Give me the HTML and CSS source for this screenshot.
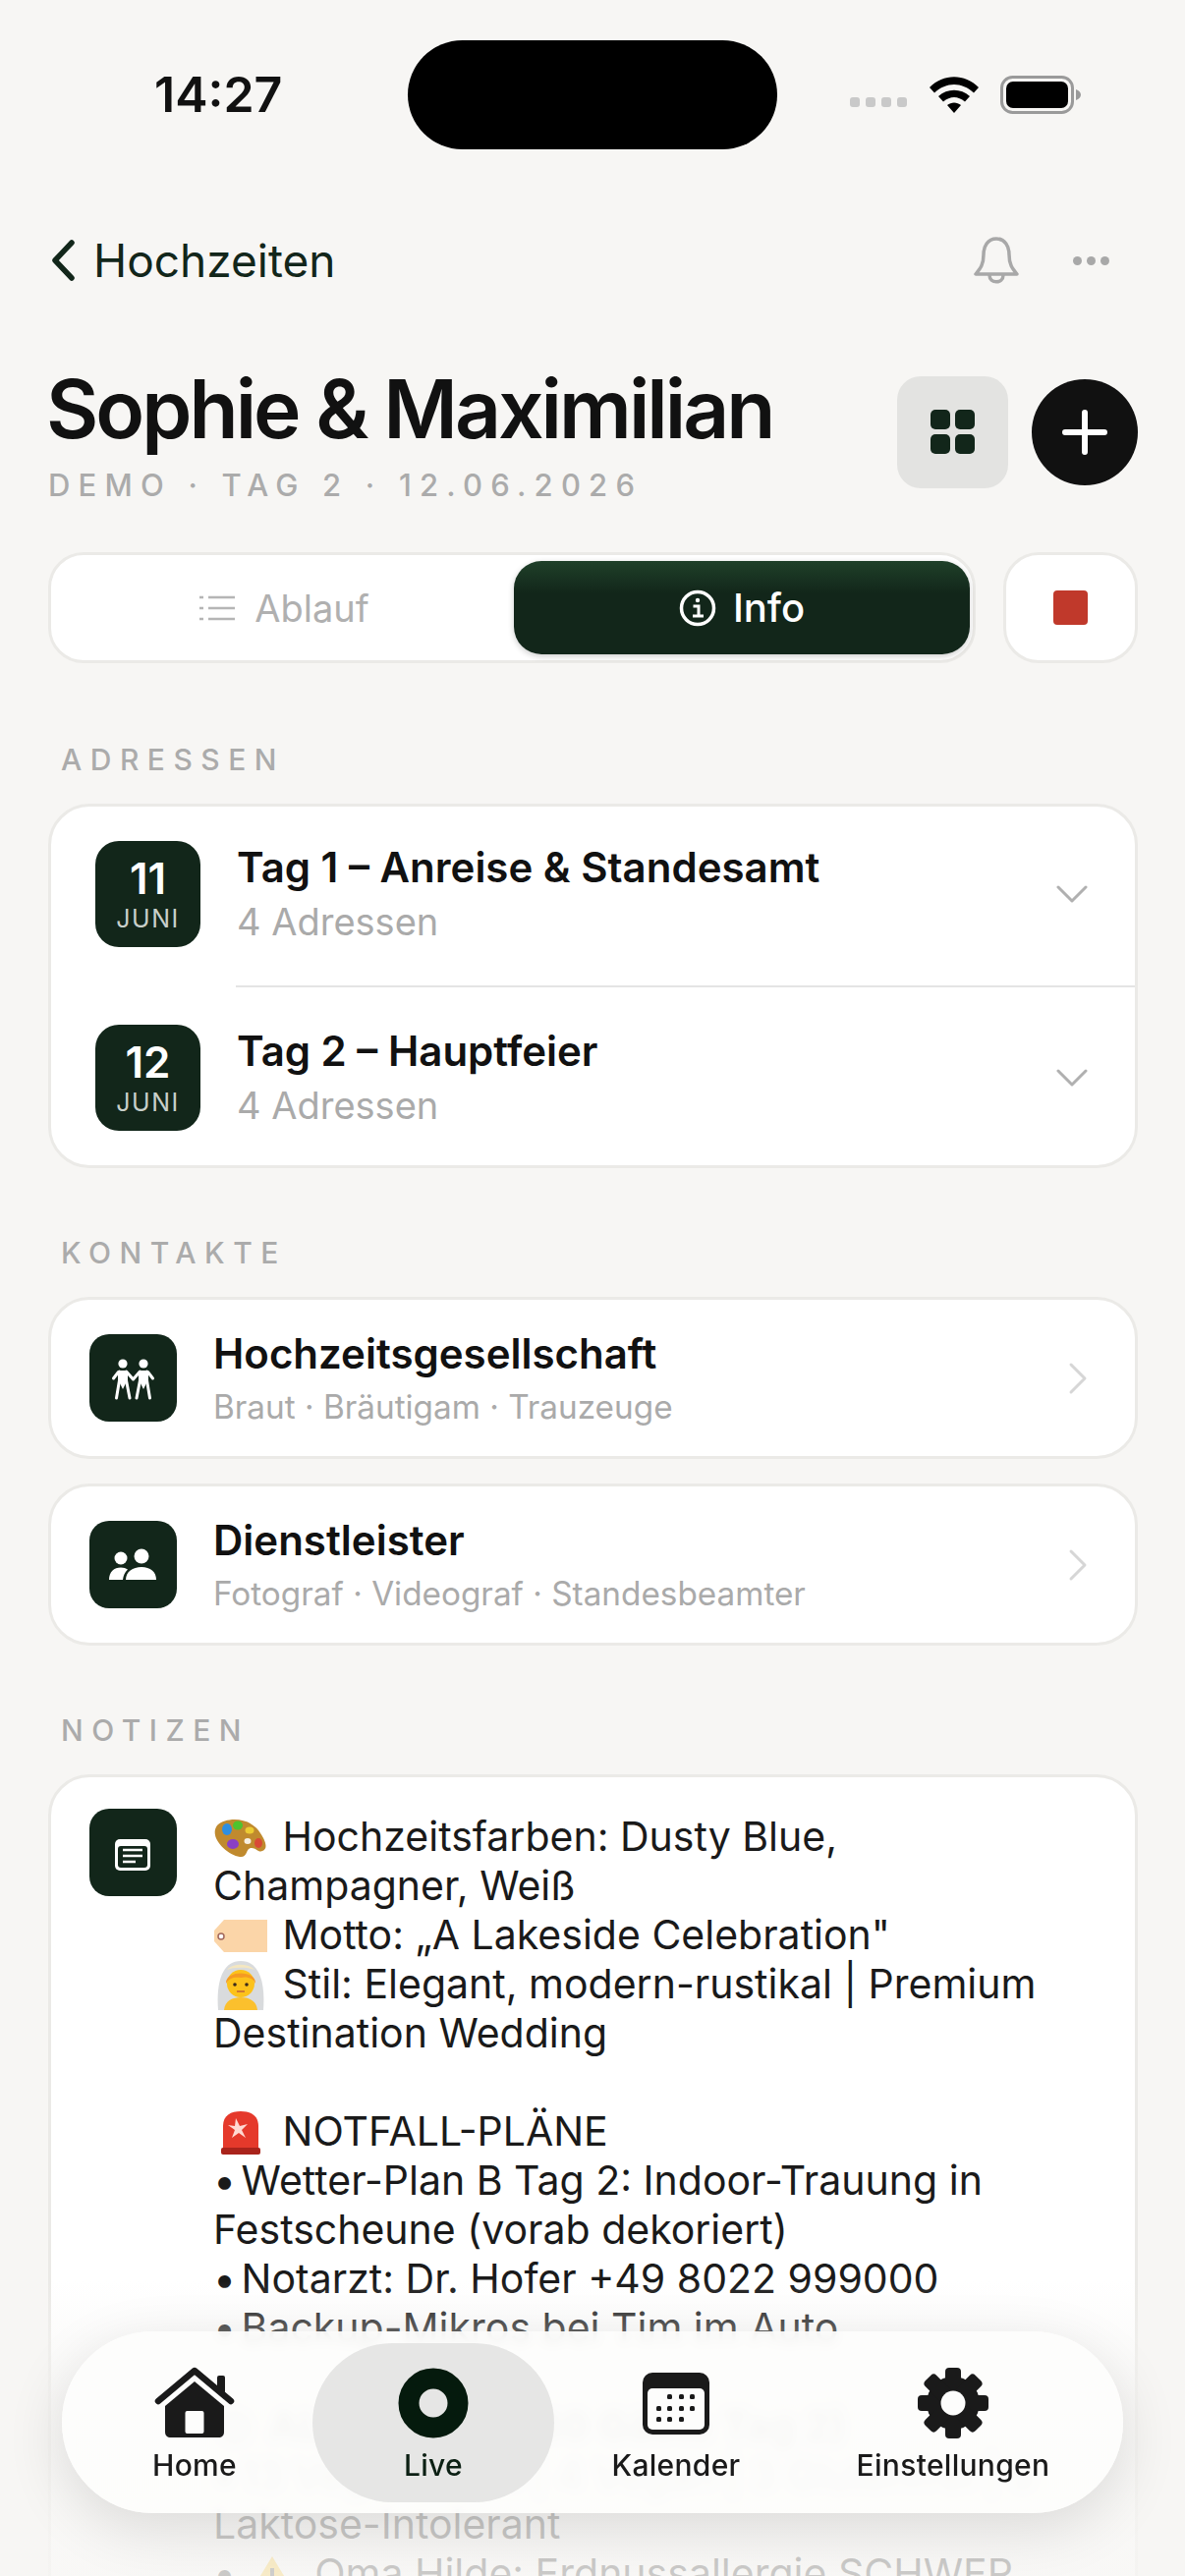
FILE: index.html
```html
<!DOCTYPE html>
<html lang="de">
<head>
  <meta charset="UTF-8" />
  <title>Sophie &amp; Maximilian</title>
  <meta name="viewport" content="width=device-width, initial-scale=1.0" />
  <link rel="stylesheet" href="styles.css">
</head>
<body>
<div class="screen">

  <!-- status bar -->
  <div class="status">
    <span class="clock">14:27</span>
    <div class="island"></div>
    <div class="status-icons">
      <div class="signal"><i></i><i></i><i></i><i></i></div>
      <svg class="wifi" width="50" height="37" viewBox="0 0 50 37">
        <path d="M0 11 C14 -3.500 36 -3.500 50 11 L45 16.500 C33 5 17 5 5 16.500 Z"/>
        <path d="M9 20 C18 11.500 32 11.500 41 20 L36 25.500 C29 19.500 21 19.500 14 25.500 Z"/>
        <path d="M18 29 C22 25.500 28 25.500 32 29 L25 37 Z"/>
      </svg>
      <svg class="battery" width="82" height="39" viewBox="0 0 82 39">
        <rect x="1.500" y="1.500" width="72" height="36" rx="11" fill="none" stroke="#9a9a9a" stroke-width="3"/>
        <rect x="6" y="6" width="63" height="27" rx="7" fill="#000"/>
        <path d="M77 14 C80 15 82 17 82 19.500 C82 22 80 24 77 25 Z" fill="#9a9a9a"/>
      </svg>
    </div>
  </div>

  <!-- nav row -->
  <div class="topnav">
    <div class="back">
      <svg width="26" height="42" viewBox="0 0 26 42"><path d="M22 3 L5 21 L22 39" fill="none" stroke="#12261a" stroke-width="5.500" stroke-linecap="round" stroke-linejoin="round"/></svg>
      <span>Hochzeiten</span>
    </div>
    <div class="topnav-right">
      <svg width="48" height="50" viewBox="0 0 48 50" fill="none" stroke="#a8a8a8" stroke-width="3.500" stroke-linejoin="round"><path d="M24 3 C15 3 11 11 11 19 C11 29 8 33 3 39 L45 39 C40 33 37 29 37 19 C37 11 33 3 24 3 Z"/><path d="M17 40 C17 49 31 49 31 40"/></svg>
      <div class="more"><i></i><i></i><i></i></div>
    </div>
  </div>

  <!-- title -->
  <div class="head">
    <div>
      <h1>Sophie &amp; Maximilian</h1>
      <div class="subline">DEMO · TAG 2 · 12.06.2026</div>
    </div>
    <div class="head-btns">
      <button class="btn-grid">
        <svg width="46" height="46" viewBox="0 0 46 46" fill="#12261a"><rect width="20" height="20" rx="5"/><rect x="25" width="20" height="20" rx="5"/><rect y="25" width="20" height="20" rx="5"/><rect x="25" y="25" width="20" height="20" rx="5"/></svg>
      </button>
      <button class="btn-add">
        <svg width="46" height="46" viewBox="0 0 46 46" stroke="#fff" stroke-width="6" stroke-linecap="round"><path d="M23 3 V43 M3 23 H43"/></svg>
      </button>
    </div>
  </div>

  <!-- tabs -->
  <div class="tabs-row">
    <div class="tabs">
      <div class="tab">
        <svg width="36" height="28" viewBox="0 0 36 28" stroke="#b5b5b5" stroke-width="2.500"><path d="M9 3 H36 M9 14 H36 M9 25 H36"/><path d="M0 3 H4 M0 14 H4 M0 25 H4"/></svg>
        Ablauf
      </div>
      <div class="tab active">
        <svg width="38" height="38" viewBox="0 0 38 38" fill="none" stroke="#fff" stroke-width="3.500"><circle cx="19" cy="19" r="16.500"/><path d="M14.500 17 H20 V27 M14 27 H25" stroke-width="3"/><circle cx="19" cy="11" r="2.200" fill="#fff" stroke="none"/></svg>
        Info
      </div>
    </div>
    <button class="stop"><i></i></button>
  </div>

  <!-- adressen -->
  <div class="label first">ADRESSEN</div>
  <div class="card days">
    <div class="day">
      <div class="date"><b>11</b><span>JUNI</span></div>
      <div class="day-text">
        <div class="title">Tag 1 – Anreise &amp; Standesamt</div>
        <div class="sub">4 Adressen</div>
      </div>
      <svg class="chev" width="32" height="20" viewBox="0 0 32 20"><path d="M2 3 L16 17 L30 3" fill="none" stroke="#b0b0b0" stroke-width="3" stroke-linecap="round" stroke-linejoin="round"/></svg>
    </div>
    <div class="day">
      <div class="date"><b>12</b><span>JUNI</span></div>
      <div class="day-text">
        <div class="title">Tag 2 – Hauptfeier</div>
        <div class="sub">4 Adressen</div>
      </div>
      <svg class="chev" width="32" height="20" viewBox="0 0 32 20"><path d="M2 3 L16 17 L30 3" fill="none" stroke="#b0b0b0" stroke-width="3" stroke-linecap="round" stroke-linejoin="round"/></svg>
    </div>
  </div>

  <!-- kontakte -->
  <div class="label">KONTAKTE</div>
  <div class="contacts">
    <div class="card contact">
      <div class="tile">
        <svg width="89" height="89" viewBox="0 0 89 89" fill="none" stroke="#fff" stroke-linecap="round" stroke-linejoin="round">
          <circle cx="34" cy="30" r="4.600" fill="#fff" stroke="none"/>
          <circle cx="55" cy="30" r="4.600" fill="#fff" stroke="none"/>
          <path d="M24.500 45 L29.500 38.500 H38 L44.500 46 L51 38.500 H59.500 L64.500 45" stroke-width="3"/>
          <path d="M30.500 38 V47 L27.500 65 M37.500 38 V47 L41 65 M51.500 38 V47 L48 65 M58.500 38 V47 L61.500 65" stroke-width="3"/>
          <path d="M30 39 H38 V48 H30 Z M51 39 H59 V48 H51 Z M30 48 L34 56 L38 48 Z M51 48 L55 56 L59 48 Z" fill="#fff" stroke="none"/>
        </svg>
      </div>
      <div class="contact-text">
        <div class="title">Hochzeitsgesellschaft</div>
        <div class="small">Braut · Bräutigam · Trauzeuge</div>
      </div>
      <svg class="arrow" width="20" height="34" viewBox="0 0 20 34"><path d="M3 3 L17 17 L3 31" fill="none" stroke="#d6d6d6" stroke-width="3" stroke-linecap="round" stroke-linejoin="round"/></svg>
    </div>
    <div class="card contact">
      <div class="tile">
        <svg width="89" height="89" viewBox="0 0 89 89" fill="#fff">
          <circle cx="32" cy="38" r="6.500"/>
          <circle cx="53" cy="36" r="7.500"/>
          <path d="M20 60 C20 52 25 47.500 32 47.500 C35 47.500 37 48.300 39 49.500 C36 52 34.500 56 34 60 Z"/>
          <path d="M37 60 C37 52 44 47 53 47 C62 47 68 52 68 60 Z"/>
        </svg>
      </div>
      <div class="contact-text">
        <div class="title">Dienstleister</div>
        <div class="small">Fotograf · Videograf · Standesbeamter</div>
      </div>
      <svg class="arrow" width="20" height="34" viewBox="0 0 20 34"><path d="M3 3 L17 17 L3 31" fill="none" stroke="#d6d6d6" stroke-width="3" stroke-linecap="round" stroke-linejoin="round"/></svg>
    </div>
  </div>

  <!-- notizen -->
  <div class="label">NOTIZEN</div>
  <div class="card notes">
    <div class="tile">
      <svg width="89" height="89" viewBox="0 0 89 89">
        <rect x="26" y="31" width="36" height="32" rx="5" fill="#fff"/>
        <rect x="29" y="38" width="30" height="22" rx="3" fill="#12261a"/>
        <path d="M34 42 H54 M34 48 H54 M34 54 H47" stroke="#fff" stroke-width="2.500"/>
      </svg>
    </div>
    <div class="note-text">
      <div><svg class="emoji" width="56" height="42" viewBox="0 0 56 42"><path d="M4 8 C14 -1 36 0 46 13 C54 24 56 32 50 34 C46 36 43 30 38 31 C33 32 35 41 27 40 C14 38 -5 20 4 8 Z" fill="#c08a2e"/><ellipse cx="14" cy="12" rx="5" ry="6" fill="#2d8fe0"/><ellipse cx="25" cy="8" rx="5" ry="4.500" fill="#4fc32e"/><ellipse cx="37" cy="13" rx="4.500" ry="3.500" fill="#eccb33"/><ellipse cx="20" cy="27" rx="6" ry="5" fill="#8a3fc6"/><ellipse cx="46" cy="26" rx="4" ry="5" fill="#d94a36"/><ellipse cx="35" cy="24" rx="3.500" ry="3" fill="#f7f0e2"/></svg> Hochzeitsfarben: Dusty Blue,</div>
      <div>Champagner, Weiß</div>
      <div><svg class="emoji" width="56" height="34" viewBox="0 0 56 34"><path d="M11 0 H55 V33 H11 L1 22 V11 Z" fill="#fbd5a8"/><circle cx="8" cy="17" r="3" fill="#fff" stroke="#a2685c" stroke-width="1.500"/></svg> Motto: „A Lakeside Celebration"</div>
      <div><svg class="emoji" width="56" height="52" viewBox="0 0 56 52"><path d="M5 51 C3 25 8 1 28 1 C48 1 53 25 51 51 Z" fill="#d9dbdd"/><path d="M14 10 C20 3 36 3 42 10 C36 7 20 7 14 10 Z" fill="#f4e7c0"/><path d="M11 51 C12 41 20 38 28 38 C36 38 44 41 45 51 Z" fill="#fbc02d"/><circle cx="28" cy="24" r="14" fill="#fcc21b"/><path d="M13 24 C12 10 44 10 43 24 C40 17 32 17 28 18 C22 17 16 18 13 24 Z" fill="#f59a23"/><circle cx="22" cy="25" r="1.800" fill="#3a2a1a"/><circle cx="34" cy="25" r="1.800" fill="#3a2a1a"/><path d="M24 32 H32" stroke="#c0603c" stroke-width="1.500"/></svg> Stil: Elegant, modern-rustikal | Premium</div>
      <div>Destination Wedding</div>
      <div>&nbsp;</div>
      <div><svg class="emoji" width="56" height="46" viewBox="0 0 56 46"><path d="M10 38 V16 C10 5 18 1 28 1 C38 1 46 5 46 16 V38 Z" fill="#e5392b"/><rect x="8" y="38" width="40" height="7" rx="2" fill="#a9231b"/><path d="M23 8 L27 16 L35 14 L29 20 L33 28 L26 23 L19 28 L22 20 L15 15 L22 16 Z" fill="#ffd9d2"/></svg> NOTFALL-PLÄNE</div>
      <div><span class="dot">•</span> Wetter-Plan B Tag 2: Indoor-Trauung in</div>
      <div>Festscheune (vorab dekoriert)</div>
      <div><span class="dot">•</span> Notarzt: Dr. Hofer +49 8022 999000</div>
      <div><span class="dot">•</span> Backup-Mikros bei Tim im Auto</div>
      <div>&nbsp;</div>
      <div class="heading"><svg class="emoji" width="44" height="40" viewBox="0 0 44 40"><circle cx="22" cy="20" r="18" fill="#9a9a9a"/><circle cx="22" cy="20" r="11" fill="#cfcfcf"/></svg> ALLERGIEN (140 Gäste Tag 2)</div>
      <div><span class="dot">•</span> 13 Vegetarisch | 4 Vegan | 3 Glutenfrei | 5</div>
      <div>Laktose-Intolerant</div>
      <div>• <svg class="emoji" width="54" height="42" viewBox="0 0 54 42"><path d="M25 2 L48 40 H2 Z" fill="#fcc21b"/><path d="M25 14 V28 M25 32 V36" stroke="#333" stroke-width="4"/></svg> Oma Hilde: Erdnussallergie SCHWER</div>
    </div>
  </div>

  <div class="fade"></div>

  <!-- tab bar -->
  <nav class="tabbar">
    <div class="item">
      <svg width="82" height="74" viewBox="0 0 82 74">
        <path d="M4 35 L41 4 L78 35" fill="none" stroke="#1a1a1a" stroke-width="6.500" stroke-linecap="round" stroke-linejoin="round"/>
        <rect x="64" y="9" width="8" height="18" rx="2" fill="#1a1a1a"/>
        <path d="M11 40 L41 15 L71 40 V66 C71 70 69 72 65 72 H17 C13 72 11 70 11 66 Z" fill="#1a1a1a"/>
        <rect x="31.500" y="45" width="19" height="23" rx="2" fill="#fdfdfc"/>
      </svg>
      <span>Home</span>
    </div>
    <div class="item live">
      <svg width="74" height="74" viewBox="0 0 74 74"><circle cx="37" cy="37" r="25" fill="none" stroke="#051a0d" stroke-width="21"/></svg>
      <span>Live</span>
    </div>
    <div class="item">
      <svg width="70" height="74" viewBox="0 0 70 74">
        <rect x="1" y="6" width="68" height="63" rx="10" fill="#1a1a1a"/>
        <rect x="6" y="22" width="58" height="42" rx="5" fill="#fdfdfc"/>
        <g fill="#1a1a1a">
          <rect x="26" y="28" width="5" height="5" rx="1.500"/><rect x="38" y="28" width="5" height="5" rx="1.500"/><rect x="49" y="28" width="5" height="5" rx="1.500"/>
          <rect x="15" y="40" width="5" height="5" rx="1.500"/><rect x="26" y="40" width="5" height="5" rx="1.500"/><rect x="38" y="40" width="5" height="5" rx="1.500"/><rect x="49" y="40" width="5" height="5" rx="1.500"/>
          <rect x="15" y="51" width="5" height="5" rx="1.500"/><rect x="26" y="51" width="5" height="5" rx="1.500"/><rect x="38" y="51" width="5" height="5" rx="1.500"/>
        </g>
      </svg>
      <span>Kalender</span>
    </div>
    <div class="item">
      <svg width="74" height="74" viewBox="0 0 74 74" fill="#1a1a1a">
        <circle cx="37" cy="37" r="27"/>
        <rect x="29" y="1" width="16" height="72" rx="4"/>
        <rect x="29" y="1" width="16" height="72" rx="4" transform="rotate(45 37 37)"/>
        <rect x="29" y="1" width="16" height="72" rx="4" transform="rotate(90 37 37)"/>
        <rect x="29" y="1" width="16" height="72" rx="4" transform="rotate(135 37 37)"/>
        <circle cx="37" cy="37" r="12.500" fill="#fdfdfc"/>
      </svg>
      <span>Einstellungen</span>
    </div>
  </nav>

</div>
</body>
</html>
```

FILE: styles.css
```css
* {
  box-sizing: border-box;
}
html, body {
  margin: 0;
  padding: 0;
}
body {
  background-color: #f7f6f4;
  color: #111;
  font-family: Inter, "Liberation Sans", sans-serif;
}
.screen {
  position: relative;
  width: 1206px;
  height: 2622px;
  overflow: hidden;
  padding: 41px 48px 0 49px;
}
button {
  border: none;
  padding: 0;
  display: flex;
  align-items: center;
  justify-content: center;
}

/* status bar */
.status {
  display: flex;
  align-items: center;
  height: 111px;
  margin-left: 108px;
}
.clock {
  font-size: 50px;
  font-weight: 600;
  width: 258px;
  line-height: 111px;
}
.island {
  width: 376px;
  height: 111px;
  background: #000;
  border-radius: 56px;
}
.status-icons {
  display: flex;
  align-items: center;
  margin-left: 74px;
}
.signal {
  display: flex;
  gap: 6px;
  margin-top: 14px;
}
.signal i {
  width: 10px;
  height: 10px;
  border-radius: 3px;
  background: #c9c9c9;
}
.wifi {
  margin-left: 23px;
}
.battery {
  margin-left: 22px;
}

/* nav row */
.topnav {
  display: flex;
  align-items: center;
  justify-content: space-between;
  height: 50px;
  margin-top: 88px;
}
.back {
  display: flex;
  align-items: center;
  gap: 18px;
  color: #12261a;
  font-size: 46px;
  padding-left: 2px;
}
.topnav-right {
  display: flex;
  align-items: center;
  gap: 54px;
  padding-right: 29px;
}
.more {
  display: flex;
  gap: 5px;
}
.more i {
  width: 9px;
  height: 9px;
  border-radius: 50%;
  background: #a8a8a8;
}

/* title */
.head {
  display: flex;
  justify-content: space-between;
  align-items: flex-start;
  margin-top: 79px;
}
h1 {
  margin: 0 0 0 -2px;
  font-size: 82px;
  font-weight: 600;
  line-height: 96px;
  letter-spacing: -3px;
}
.subline {
  margin-top: 9px;
  color: #ababab;
  font-size: 31px;
  font-weight: 500;
  letter-spacing: 8.200px;
  line-height: 40px;
}
.head-btns {
  display: flex;
  align-items: center;
  gap: 24px;
  margin-top: 14px;
}
.btn-grid {
  width: 113px;
  height: 114px;
  border-radius: 24px;
  background: #e3e3e1;
}
.btn-add {
  width: 108px;
  height: 108px;
  border-radius: 50%;
  background: #111;
}

/* tabs */
.tabs-row {
  display: flex;
  gap: 28px;
  margin-top: 48px;
}
.tabs {
  flex: 1;
  display: flex;
  height: 113px;
  padding: 6px 3px 6px 0;
  background: #fff;
  border: 3px solid #ebeae7;
  border-radius: 36px;
}
.tab {
  flex: 1;
  display: flex;
  align-items: center;
  justify-content: center;
  gap: 20px;
  padding-left: 4px;
  color: #b0b0b0;
  font-size: 38px;
}
.tab.active {
  flex: 0 0 464px;
  gap: 17px;
  padding-left: 0;
  background: linear-gradient(#1f4029, #12261a 35%);
  color: #fff;
  font-size: 40px;
  font-weight: 500;
  border-radius: 28px;
  box-shadow: 0 2px 6px rgba(0, 0, 0, .2);
}
.stop {
  width: 137px;
  height: 113px;
  background: #fff;
  border: 3px solid #ebeae7;
  border-radius: 36px;
}
.stop i {
  display: block;
  width: 35px;
  height: 35px;
  border-radius: 4px;
  background: #c0392b;
}

/* cards */
.label {
  margin: 0 0 30px 13px;
  color: #ababab;
  font-size: 30px;
  font-weight: 500;
  letter-spacing: 8.500px;
  line-height: 30px;
}
.label.first {
  margin-top: 83px;
}
.card {
  background: #fff;
  border: 3px solid #ebeae7;
  border-radius: 42px;
}
.title {
  font-size: 42px;
  font-weight: 600;
  line-height: 48px;
}
.days {
  margin-bottom: 71px;
}
.day {
  position: relative;
  display: flex;
  align-items: center;
  height: 182px;
  padding: 0 48px 4px 45px;
}
.day + .day {
  height: 183px;
  padding: 5px 48px 0 45px;
}
.day + .day::before {
  content: "";
  position: absolute;
  left: 188px;
  right: 0;
  top: 0;
  border-top: 2px solid #e4e4e4;
}
.day-text {
  flex: 1;
  margin-left: 37px;
}
.sub {
  color: #aaa;
  font-size: 38px;
  line-height: 46px;
  margin-top: 8px;
}
.date {
  width: 107px;
  height: 108px;
  border-radius: 24px;
  background: #12261a;
  color: #fff;
  display: flex;
  flex-direction: column;
  align-items: center;
  justify-content: center;
}
.date b {
  font-size: 44px;
  font-weight: 600;
  line-height: 46px;
}
.date span {
  font-size: 25px;
  letter-spacing: 1.500px;
  line-height: 30px;
  margin-top: 3px;
  color: #c8cfca;
}
.contacts {
  display: flex;
  flex-direction: column;
  gap: 25px;
  margin-bottom: 71px;
}
.contact {
  display: flex;
  align-items: center;
  height: 165px;
  padding: 0 48px 0 39px;
}
.tile {
  flex: none;
  width: 89px;
  height: 89px;
  border-radius: 20px;
  background: #12261a;
}
.tile svg {
  display: block;
}
.contact-text {
  flex: 1;
  margin-left: 37px;
}
.small {
  color: #aaa;
  font-size: 33.300px;
  line-height: 40px;
  margin-top: 10px;
}

/* notes */
.notes {
  display: flex;
  align-items: flex-start;
  padding: 32px 48px 0 39px;
  height: 1000px;
}
.note-text {
  flex: 1;
  margin-left: 37px;
  padding-top: 3px;
  font-size: 41px;
  line-height: 50px;
  color: #1a1a1a;
}
.note-text .heading {
  font-weight: 700;
}
.dot {
  margin-right: -6px;
}
.emoji {
  vertical-align: middle;
  margin: -12px 3px -8px 0;
}

/* tab bar */
.fade {
  position: absolute;
  left: 0;
  right: 0;
  bottom: 0;
  height: 300px;
  background: linear-gradient(rgba(247, 246, 244, 0), rgba(247, 246, 244, .75) 40%, rgba(247, 246, 244, .8));
}
.tabbar {
  position: absolute;
  left: 63px;
  top: 2373px;
  width: 1080px;
  height: 185px;
  display: grid;
  grid-template-columns: 240px 246px 248px 316px;
  padding: 12px 15px 11px;
  background: rgba(253, 253, 252, .9);
  backdrop-filter: blur(6px);
  border-radius: 92px;
  box-shadow: 0 16px 60px rgba(0, 0, 0, .12);
}
.item {
  display: flex;
  flex-direction: column;
  align-items: center;
  padding-top: 24px;
  font-size: 30px;
  font-weight: 500;
  letter-spacing: .3px;
  color: #1a1a1a;
}
.item svg {
  height: 74px;
}
.item span {
  margin-top: 8px;
  line-height: 36px;
}
.item.live {
  background: #e6e6e5;
  border-radius: 81px;
  color: #0c2014;
}
```
